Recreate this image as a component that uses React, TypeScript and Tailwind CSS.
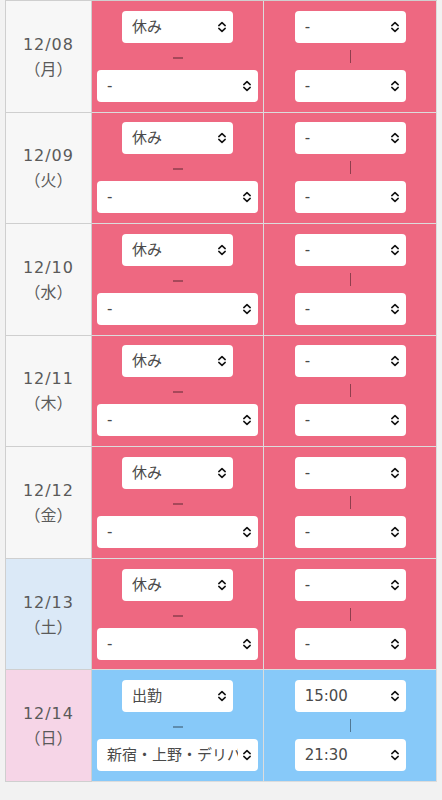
import React from "react";

const FONT = { fontFamily: '"DejaVu Sans", "Noto Sans CJK JP", sans-serif' };

function Chevron() {
  return (
    <svg width="10" height="12" viewBox="0 0 10 12" className="shrink-0">
      <path d="M1.8 4.6 L5 1.6 L8.2 4.6" fill="none" stroke="#111" strokeWidth="1.5" strokeLinecap="round" strokeLinejoin="round" />
      <path d="M1.8 7.4 L5 10.4 L8.2 7.4" fill="none" stroke="#111" strokeWidth="1.5" strokeLinecap="round" strokeLinejoin="round" />
    </svg>
  );
}

function Sel({ text, wide }: { text: string; wide?: boolean }) {
  return (
    <div
      className={`${wide ? "w-[161px]" : "w-[111px]"} h-[32px] rounded-[4px] bg-white flex items-center pl-[10px] pr-[6px] gap-1`}
    >
      <span className="flex-1 min-w-0 whitespace-nowrap overflow-hidden text-[15px] text-[#4a4a4a] leading-[22px]">{text}</span>
      <Chevron />
    </div>
  );
}

type Row = { date: string; dow: string; dateBg: string; work: boolean };

const rows: Row[] = [
  { date: "12/08", dow: "（月）", dateBg: "bg-[#f7f7f7]", work: false },
  { date: "12/09", dow: "（火）", dateBg: "bg-[#f7f7f7]", work: false },
  { date: "12/10", dow: "（水）", dateBg: "bg-[#f7f7f7]", work: false },
  { date: "12/11", dow: "（木）", dateBg: "bg-[#f7f7f7]", work: false },
  { date: "12/12", dow: "（金）", dateBg: "bg-[#f7f7f7]", work: false },
  { date: "12/13", dow: "（土）", dateBg: "bg-[#dbe9f7]", work: false },
  { date: "12/14", dow: "（日）", dateBg: "bg-[#f6d5e7]", work: true },
];

export default function App() {
  return (
    <div className="min-h-[800px] bg-[#f2f2f2] pl-[5px] w-[442px]" style={FONT}>
      <div className="w-[432px] border-t border-l border-[#cfcfcf]">
        {rows.map((r) => {
          const bg = r.work ? "bg-[#87c9f9]" : "bg-[#ee6881]";
          return (
            <div key={r.date} className="flex h-[111.57px]">
              <div
                className={`${r.dateBg} w-[86px] border-r border-b border-[#cfcfcf] flex flex-col items-center justify-center text-[16px] text-[#5a5a5a] leading-[25px]`}
              >
                <span className="tracking-[0.06em] pt-[1px]">{r.date}</span>
                <span>{r.dow}</span>
              </div>
              <div className={`${bg} w-[173px] border-r border-b border-[#dcdcdc] flex flex-col items-center justify-center`}>
                <Sel text={r.work ? "出勤" : "休み"} />
                <div className="h-[27px] flex items-center justify-center">
                  <div className="w-[10px] h-[2px] bg-black/30 mt-[3px]" />
                </div>
                <Sel text={r.work ? "新宿・上野・デリバリー" : "-"} wide />
              </div>
              <div className={`${bg} w-[173px] border-r border-b border-[#dcdcdc] flex flex-col items-center justify-center`}>
                <Sel text={r.work ? "15:00" : "-"} />
                <div className="h-[27px] flex items-center justify-center">
                  <div className="w-[1px] h-[13px] bg-black/40" />
                </div>
                <Sel text={r.work ? "21:30" : "-"} />
              </div>
            </div>
          );
        })}
      </div>
    </div>
  );
}
